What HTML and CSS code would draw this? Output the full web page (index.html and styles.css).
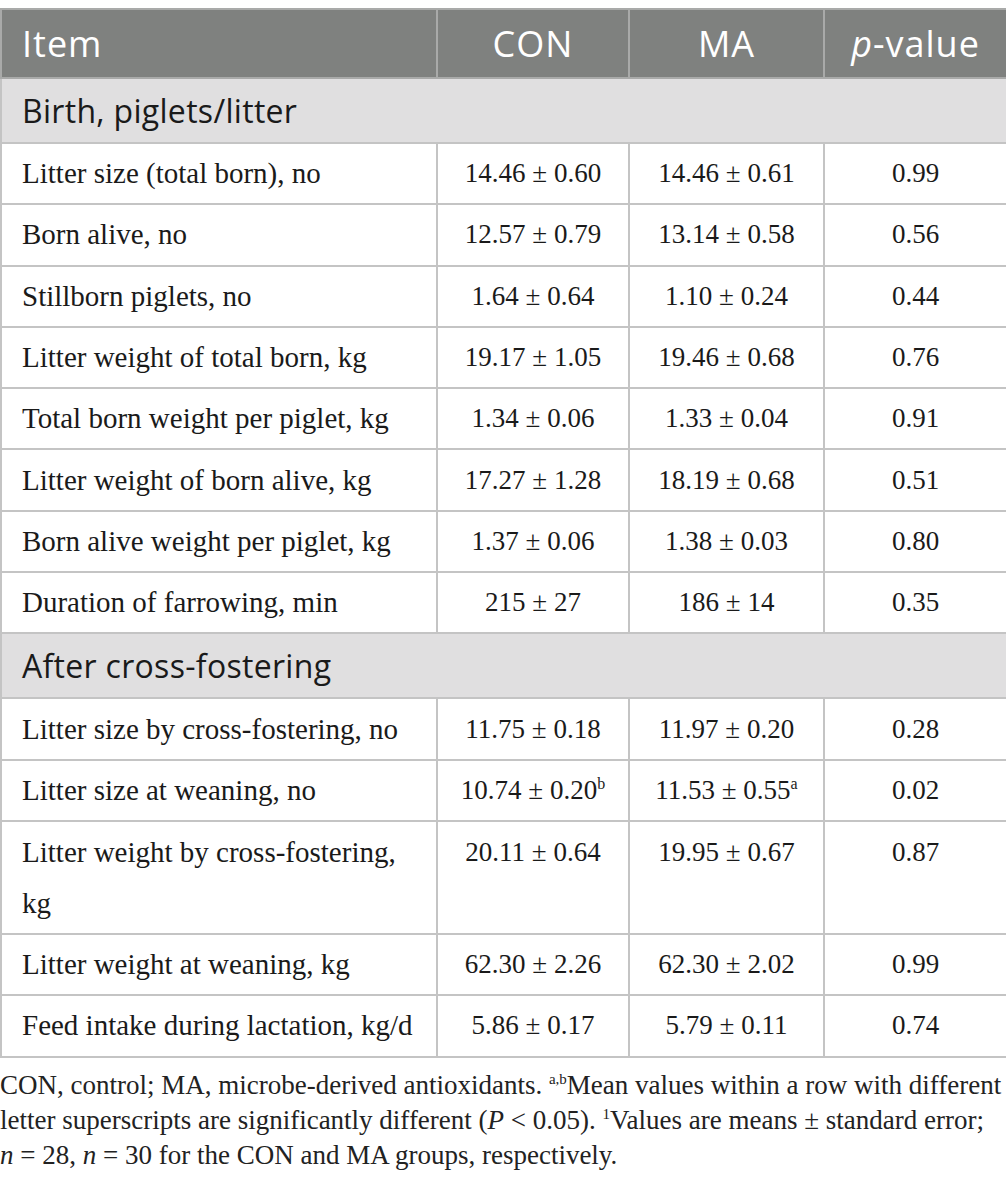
FILE: index.html
```html
<!DOCTYPE html>
<html lang="en">
<head>
    <meta charset="UTF-8">
    <meta name="viewport" content="width=device-width, initial-scale=1.0">
    <title>Table</title>
    <link rel="stylesheet" href="styles.css">
</head>
<body>
    <div class="wrap">
        <table class="data-table">
            <colgroup>
                <col class="col-item">
                <col class="col-con">
                <col class="col-ma">
                <col class="col-p">
            </colgroup>
            <thead>
                <tr>
                    <th class="left">Item</th>
                    <th>CON</th>
                    <th>MA</th>
                    <th><i>p</i>-value</th>
                </tr>
            </thead>
            <tbody>
                <tr class="section"><td colspan="4">Birth, piglets/litter</td></tr>
                <tr><td>Litter size (total born), no</td><td>14.46 ± 0.60</td><td>14.46 ± 0.61</td><td>0.99</td></tr>
                <tr><td>Born alive, no</td><td>12.57 ± 0.79</td><td>13.14 ± 0.58</td><td>0.56</td></tr>
                <tr><td>Stillborn piglets, no</td><td>1.64 ± 0.64</td><td>1.10 ± 0.24</td><td>0.44</td></tr>
                <tr><td>Litter weight of total born, kg</td><td>19.17 ± 1.05</td><td>19.46 ± 0.68</td><td>0.76</td></tr>
                <tr><td>Total born weight per piglet, kg</td><td>1.34 ± 0.06</td><td>1.33 ± 0.04</td><td>0.91</td></tr>
                <tr><td>Litter weight of born alive, kg</td><td>17.27 ± 1.28</td><td>18.19 ± 0.68</td><td>0.51</td></tr>
                <tr><td>Born alive weight per piglet, kg</td><td>1.37 ± 0.06</td><td>1.38 ± 0.03</td><td>0.80</td></tr>
                <tr><td>Duration of farrowing, min</td><td>215 ± 27</td><td>186 ± 14</td><td>0.35</td></tr>
                <tr class="section"><td colspan="4">After cross-fostering</td></tr>
                <tr><td>Litter size by cross-fostering, no</td><td>11.75 ± 0.18</td><td>11.97 ± 0.20</td><td>0.28</td></tr>
                <tr><td>Litter size at weaning, no</td><td>10.74 ± 0.20<sup>b</sup></td><td>11.53 ± 0.55<sup>a</sup></td><td>0.02</td></tr>
                <tr class="tall"><td>Litter weight by cross-fostering, kg</td><td>20.11 ± 0.64</td><td>19.95 ± 0.67</td><td>0.87</td></tr>
                <tr><td>Litter weight at weaning, kg</td><td>62.30 ± 2.26</td><td>62.30 ± 2.02</td><td>0.99</td></tr>
                <tr><td>Feed intake during lactation, kg/d</td><td>5.86 ± 0.17</td><td>5.79 ± 0.11</td><td>0.74</td></tr>
            </tbody>
        </table>
        <p class="note">CON, control; MA, microbe-derived antioxidants. <sup>a,b</sup>Mean values within a row with different<br>letter superscripts are significantly different (<i>P</i> &lt; 0.05). <sup>1</sup>Values are means ± standard error;<br><i>n</i> = 28, <i>n</i> = 30 for the CON and MA groups, respectively.</p>
    </div>
</body>
</html>
```

FILE: styles.css
```css
body {
    margin: 0;
    background-color: #fff;
    font-family: 'Liberation Serif', serif;
    color: #1a1a1a;
}

.wrap {
    padding-top: 8px;
    width: 1006px;
}

.data-table {
    width: 1006px;
    border-collapse: collapse;
    table-layout: fixed;
}

.col-item { width: 436px; }
.col-con { width: 192px; }
.col-ma { width: 195px; }
.col-p { width: 183px; }

.data-table th {
    background-color: #7f817f;
    color: #fff;
    font-family: 'Open Sans', sans-serif;
    font-weight: 400;
    font-size: 36px;
    letter-spacing: 1px;
    height: 69px;
    padding: 0 20px;
    border: 2px solid #a9aaa9;
    text-align: center;
    box-sizing: border-box;
}

.data-table th.left {
    text-align: left;
}

.data-table td {
    border: 2px solid #c4c4c4;
    font-size: 27px;
    height: 61.3px;
    padding: 0 20px;
    text-align: center;
    vertical-align: middle;
    box-sizing: border-box;
}

.data-table td:first-child {
    text-align: left;
    font-size: 29px;
}

.data-table td sup {
    font-size: 16px;
    line-height: 0;
}

.section td,
.data-table .section td:first-child {
    background-color: #e0dfe0;
    font-family: 'Open Sans', sans-serif;
    font-size: 32px;
    letter-spacing: 0.3px;
    height: 65px;
}

.tall td {
    height: 113px;
    vertical-align: top;
    padding-top: 5px;
    line-height: 51px;
}

.note {
    margin: 10px 0 0;
    font-size: 27px;
    line-height: 35px;
    color: #222;
    white-space: nowrap;
}

.note sup {
    font-size: 15px;
    line-height: 0;
}
```
